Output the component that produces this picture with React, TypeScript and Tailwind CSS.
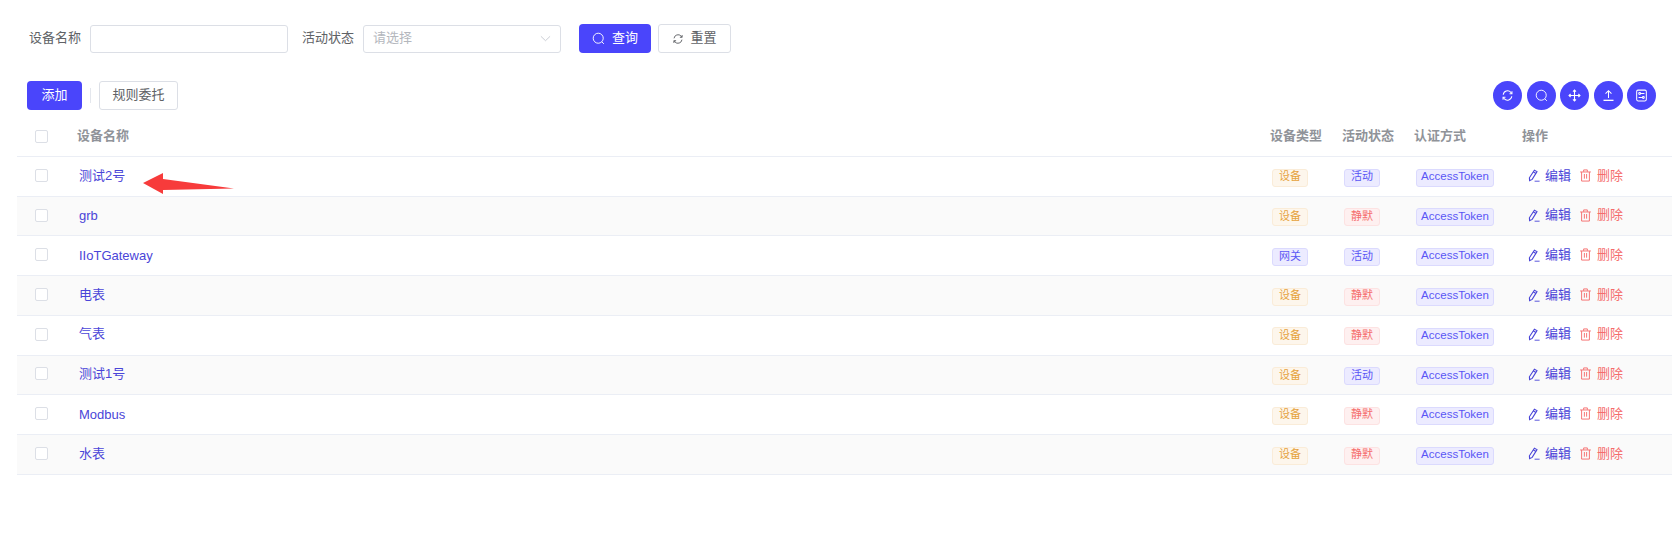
import React from "react";

type Row = { name: string; type: string; status: string };
const rows: Row[] = [
  { name: "测试2号", type: "设备", status: "活动" },
  { name: "grb", type: "设备", status: "静默" },
  { name: "IIoTGateway", type: "网关", status: "活动" },
  { name: "电表", type: "设备", status: "静默" },
  { name: "气表", type: "设备", status: "静默" },
  { name: "测试1号", type: "设备", status: "活动" },
  { name: "Modbus", type: "设备", status: "静默" },
  { name: "水表", type: "设备", status: "静默" },
];

function SearchIcon({ className = "" }: { className?: string }) {
  return (
    <svg viewBox="0 0 14 14" className={className} fill="none" stroke="currentColor" strokeWidth="1">
      <circle cx="6.7" cy="6.7" r="5.4" />
      <path d="M10.6 10.6 12.8 12.8" />
    </svg>
  );
}
function RefreshIcon({ className = "" }: { className?: string }) {
  return (
    <svg viewBox="0 0 14 14" className={className} fill="none" stroke="currentColor" strokeWidth="1.1">
      <path d="M2.4 6.2A4.7 4.7 0 0 1 10.6 3.6L11.6 4.8" />
      <path d="M11.6 7.8A4.7 4.7 0 0 1 3.4 10.4L2.4 9.2" />
      <path d="M11.8 2.4V5H9.2" />
      <path d="M2.2 11.6V9H4.8" />
    </svg>
  );
}
function MoveIcon({ className = "" }: { className?: string }) {
  return (
    <svg viewBox="0 0 14 14" className={className} fill="none" stroke="currentColor" strokeWidth="1.2">
      <path d="M7 1V13M1 7H13" />
      <path d="M5.4 2.8 7 1.2 8.6 2.8M5.4 11.2 7 12.8 8.6 11.2M2.8 5.4 1.2 7 2.8 8.6M11.2 5.4 12.8 7 11.2 8.6" />
    </svg>
  );
}
function UploadIcon({ className = "" }: { className?: string }) {
  return (
    <svg viewBox="0 0 14 14" className={className} fill="none" stroke="currentColor" strokeWidth="1.1">
      <path d="M7 9.6V2M3.8 5 7 1.8 10.2 5" />
      <path d="M1.6 12.2H12.4" strokeWidth="1.4" />
    </svg>
  );
}
function SettingIcon({ className = "" }: { className?: string }) {
  return (
    <svg viewBox="0 0 14 14" className={className} fill="none" stroke="currentColor" strokeWidth="1.1">
      <rect x="1.8" y="1.2" width="10.4" height="11.6" rx="1.4" />
      <circle cx="5" cy="4.8" r="1" />
      <path d="M6 4.8H10.2M3.8 9.2H8" />
      <circle cx="9" cy="9.2" r="1" />
    </svg>
  );
}
function EditIcon({ className = "" }: { className?: string }) {
  return (
    <svg viewBox="0 0 14 14" className={className} fill="none" stroke="currentColor" strokeWidth="1.1">
      <path d="M7.4 1.2 10 2.6 5.2 10.4 2.6 11.6 2.4 8.8Z" />
      <path d="M6.4 3 9 4.4" />
      <path d="M7.6 12.2H12.6" strokeWidth="0.9" />
    </svg>
  );
}
function TrashIcon({ className = "" }: { className?: string }) {
  return (
    <svg viewBox="0 0 14 14" className={className} fill="none" stroke="currentColor" strokeWidth="1">
      <path d="M1.2 3.2H12.8M5 3V1H9V3" />
      <path d="M2.8 3.2V13H11.2V3.2" />
      <path d="M5.8 5.4V10.4M8.2 5.4V10.4" />
    </svg>
  );
}

function Tag({ text, tone, className = "" }: { text: string; tone: "orange" | "blue" | "red"; className?: string }) {
  const tones = {
    orange: "bg-[#fdf6ec] border-[#faecd8] text-[#e6a23c]",
    blue: "bg-[#ecebff] border-[#dbdafe] text-[#5a56f5]",
    red: "bg-[#fef0f0] border-[#fde2e2] text-[#f56c6c]",
  };
  return (
    <span className={`inline-flex h-[18px] items-center justify-center rounded-[3px] border pb-[2px] leading-none ${tones[tone]} ${className}`}>
      {text}
    </span>
  );
}

const toolbarIcons = [RefreshIcon, SearchIcon, MoveIcon, UploadIcon, SettingIcon];

export default function App() {
  return (
    <div className="h-[540px] w-[1675px] overflow-hidden bg-white pl-[17px] pr-[3px] text-[13px] text-[#606266] [font-family:'Liberation_Sans','Noto_Sans_CJK_SC',sans-serif]">
      <form className="mt-[24px] flex h-[29px] items-center pl-[12px]">
        <label className="w-[50px] whitespace-nowrap pb-[2px]">设备名称</label>
        <input className="ml-[11px] h-[28px] w-[198px] rounded-[3px] border border-[#dcdfe6] bg-white" />
        <label className="ml-[14px] w-[50px] whitespace-nowrap pb-[2px]">活动状态</label>
        <div className="ml-[11px] flex h-[28px] w-[198px] items-center justify-between rounded-[3px] border border-[#dcdfe6] pl-[9px] pr-[9px] text-[#b4b7bd]">
          <span className="pb-[2px]">请选择</span>
          <svg viewBox="0 0 12 12" className="h-[11px] w-[11px] text-[#c0c4cc]" fill="none" stroke="currentColor" strokeWidth="0.9">
            <path d="M1 3.6 6 8.4 11 3.6" />
          </svg>
        </div>
        <button type="button" className="ml-[18px] flex h-[29px] w-[72px] items-center justify-center gap-[7px] rounded-[4px] bg-[#4a45fb] text-white">
          <SearchIcon className="h-[13px] w-[13px]" />
          <span className="pb-[2px]">查询</span>
        </button>
        <button type="button" className="ml-[7px] flex h-[29px] w-[73px] items-center justify-center gap-[6px] rounded-[3px] border border-[#dcdfe6] bg-white text-[#606266]">
          <RefreshIcon className="h-[12px] w-[12px]" />
          <span className="pb-[2px]">重置</span>
        </button>
      </form>

      <div className="mt-[28px] flex h-[29px] items-center pl-[10px] pr-[16px]">
        <button type="button" className="h-[29px] w-[55px] rounded-[4px] bg-[#4a45fb] pb-[2px] text-white">添加</button>
        <span className="ml-[8px] h-[15px] w-px bg-[#e4e7ed]" />
        <button type="button" className="ml-[8px] h-[29px] w-[79px] rounded-[3px] border border-[#dcdfe6] bg-white pb-[2px]">规则委托</button>
        <div className="ml-auto flex items-center gap-[4.5px]">
          {toolbarIcons.map((Icon, i) => (
            <button key={i} type="button" className="flex h-[29px] w-[29px] items-center justify-center rounded-full bg-[#4a45fb] text-white">
              <Icon className="h-[13px] w-[13px]" />
            </button>
          ))}
        </div>
      </div>

      <div className="mt-[8px]">
        <div className="flex h-[39px] items-center border-b border-[#ebeef5] font-semibold text-[#909399]">
          <div className="w-[18px]" />
          <span className="mb-[2px] h-[13px] w-[13px] rounded-[2px] border border-[#dcdfe6] bg-white" />
          <div className="ml-[29px] w-[1193px] pb-[2px]">设备名称</div>
          <div className="w-[72px] pb-[2px]">设备类型</div>
          <div className="w-[72px] pb-[2px]">活动状态</div>
          <div className="w-[108px] pb-[2px]">认证方式</div>
          <div className="pb-[2px]">操作</div>
        </div>
        {rows.map((r, i) => {
          const cjk = /[^\x00-\x7f]/.test(r.name);
          return (
            <div key={r.name} className={`flex h-[39.72px] items-center border-b border-[#ebeef5] ${i % 2 ? "bg-[#fafafa]" : "bg-white"}`}>
              <div className="w-[18px]" />
              <span className="mb-[2px] h-[13px] w-[13px] rounded-[2px] border border-[#dcdfe6] bg-white" />
              <div className={`ml-[31px] w-[1193px] text-[#4a45d8] ${cjk ? "pb-[2px]" : ""}`}>{r.name}</div>
              <div className="w-[72px]">
                <Tag text={r.type} tone={r.type === "网关" ? "blue" : "orange"} className="w-[36px] text-[11px]" />
              </div>
              <div className="w-[72px]">
                <Tag text={r.status} tone={r.status === "活动" ? "blue" : "red"} className="w-[36px] text-[11px]" />
              </div>
              <div className="w-[111px]">
                <Tag text="AccessToken" tone="blue" className="w-[78px] text-[11.5px]" />
              </div>
              <div className="flex items-center">
                <EditIcon className="h-[14px] w-[14px] text-[#4a45d8]" />
                <span className="ml-[4px] pb-[2px] text-[#4a45d8]">编辑</span>
                <TrashIcon className="mb-[2px] ml-[8px] h-[13px] w-[13px] text-[#f56c6c]" />
                <span className="ml-[5px] pb-[2px] text-[#f56c6c]">删除</span>
              </div>
            </div>
          );
        })}
      </div>

      <svg viewBox="0 0 100 30" className="pointer-events-none absolute left-[140px] top-[170px] h-[30px] w-[100px]">
        <polygon points="3,13 23,3 23,9 94,18.5 23,20 23,24" fill="#f73b3b" />
      </svg>
    </div>
  );
}
